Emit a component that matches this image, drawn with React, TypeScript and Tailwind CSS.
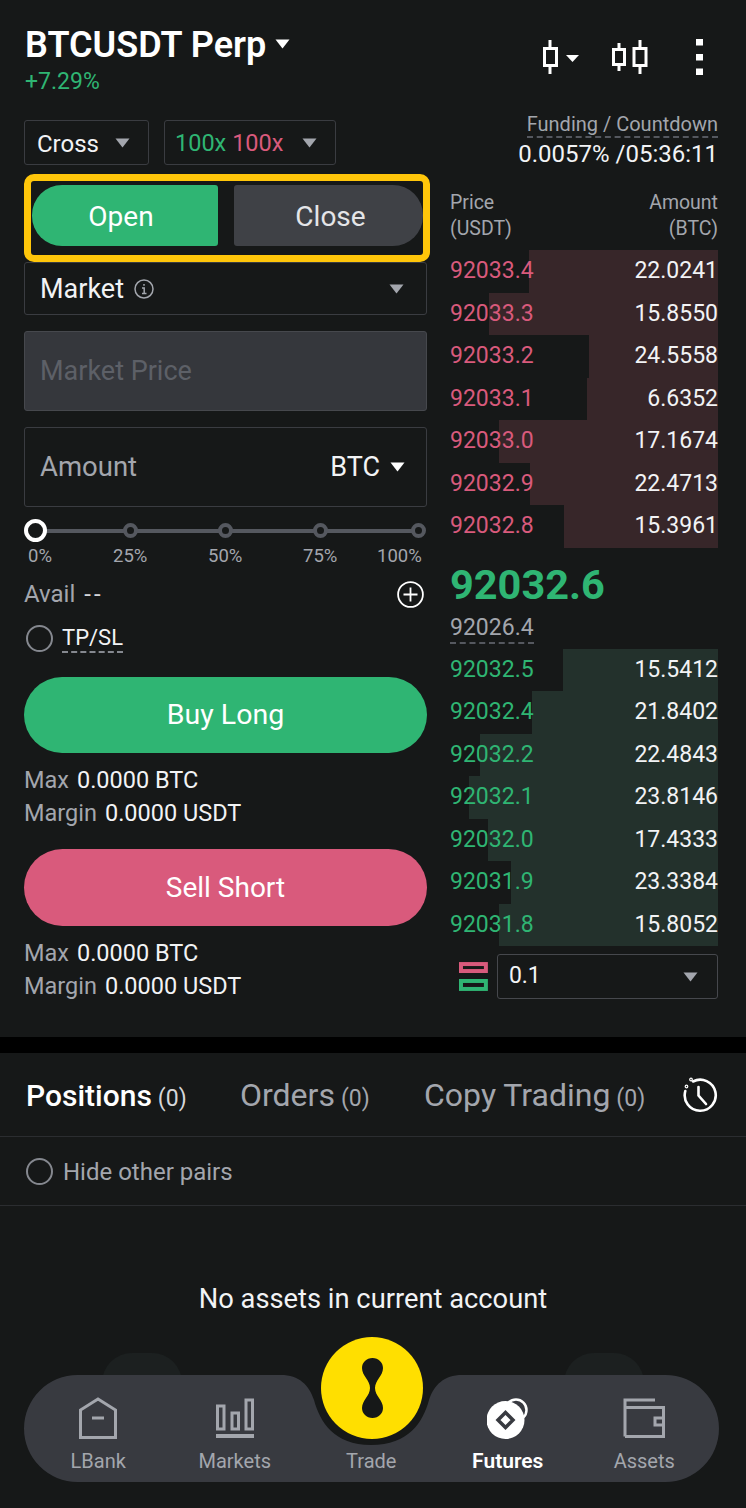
import React from "react";

const GREEN = "#2fb573";
const Tri = ({ w = 15, h = 10, c = "#a3a6ad" }: { w?: number; h?: number; c?: string }) => (
  <svg width={w} height={h} viewBox="0 0 15 10" className="shrink-0">
    <path d="M0.5 0.5H14.5L7.5 9.5Z" fill={c} />
  </svg>
);

const asks = [
  ["92033.4", "22.0241", 529],
  ["92033.3", "15.8550", 489],
  ["92033.2", "24.5558", 589],
  ["92033.1", "6.6352", 587],
  ["92033.0", "17.1674", 499],
  ["92032.9", "22.4713", 530],
  ["92032.8", "15.3961", 564],
] as const;
const bids = [
  ["92032.5", "15.5412", 563],
  ["92032.4", "21.8402", 532],
  ["92032.2", "22.4843", 480],
  ["92032.1", "23.8146", 469],
  ["92032.0", "17.4333", 488],
  ["92031.9", "23.3384", 511],
  ["92031.8", "15.8052", 499],
] as const;

const Row = ({ p, a, x, side }: { p: string; a: string; x: number; side: "ask" | "bid" }) => (
  <div className="relative flex h-[42.5px] items-center justify-between">
    <div
      className={`absolute top-0 bottom-0 right-0 ${side === "ask" ? "bg-[#372629]" : "bg-[#23312c]"}`}
      style={{ width: 718 - x }}
    />
    <span className={`relative text-[23px] ${side === "ask" ? "text-[#d95a7c]" : "text-[#2fb573]"}`}>{p}</span>
    <span className="relative text-[23px] text-[#f2f3f5]">{a}</span>
  </div>
);

const Tick = ({ className = "" }: { className?: string }) => (
  <div className={`relative h-[15px] w-[15px] rounded-full border-[4px] border-[#55585f] bg-[#161818] ${className}`} />
);

const Info = ({ label, value }: { label: string; value: string }) => (
  <div className="flex h-[33px] items-center text-[23.5px] leading-none">
    <span className="text-[#a3a6ad]">{label}</span>
    <span className="ml-[8px] text-[#f2f3f5]">{value}</span>
  </div>
);

const NavItem = ({ label, icon, active }: { label: string; icon?: React.ReactNode; active?: boolean }) => (
  <div className="flex w-[136.5px] flex-col items-center">
    <div className="flex h-[46px] items-center justify-center">{icon}</div>
    <span className={`mt-[8px] leading-[24px] ${active ? "text-[21px] font-semibold text-white" : "text-[20px] text-[#a3a6ad]"}`}>{label}</span>
  </div>
);

export default function App() {
  return (
    <div className="relative h-[1508px] w-[746px] overflow-hidden bg-[#161818] font-['Roboto',sans-serif]">
      {/* header */}
      <div className="flex h-[120px] items-start justify-between pl-[25px] pr-[41px] pt-[24px]">
        <div>
          <div className="flex items-center">
            <span className="text-[36px] font-semibold leading-[42px] text-white">BTCUSDT Perp</span>
            <span className="ml-[9px] mb-[2px]"><Tri w={15} h={10} c="#ffffff" /></span>
          </div>
          <div className="mt-[2px] text-[23px] leading-[28px] text-[#2fb573]">+7.29%</div>
        </div>
        <div className="mt-[15px] flex items-center">
          <svg width="38" height="36" viewBox="0 0 38 36" fill="none" stroke="#fff" strokeWidth="3">
            <path d="M8 1V9M8 27V35" />
            <rect x="2.5" y="9.5" width="12" height="17" />
            <path d="M24 16H37L30.5 23Z" fill="#fff" stroke="none" />
          </svg>
          <svg className="ml-[32px]" width="36" height="36" viewBox="0 0 36 36" fill="none" stroke="#fff" strokeWidth="3">
            <path d="M7 4V10M7 26V32M28 1V9M28 27V35" />
            <rect x="1.5" y="10.5" width="11" height="15" />
            <rect x="22" y="9.5" width="12" height="17" />
          </svg>
          <svg className="ml-[47px]" width="10" height="36" viewBox="0 0 10 36" fill="#fff">
            <rect x="1" y="0" width="7" height="6.5" />
            <rect x="1" y="15" width="7" height="6.5" />
            <rect x="1" y="29.5" width="7" height="6.5" />
          </svg>
        </div>
      </div>

      {/* main columns */}
      <div className="flex h-[917px] pl-[24px] pr-[28px]">
        <div className="w-[403px]">
          <div className="flex h-[45px] gap-[15px]">
            <div className="flex w-[125px] items-center justify-between rounded-[3px] border border-[#3a3c41] pl-[12px] pr-[18px]">
              <span className="pt-[2px] text-[24px] text-[#f2f3f5]">Cross</span>
              <Tri />
            </div>
            <div className="flex w-[172px] items-center justify-between rounded-[3px] border border-[#3a3c41] pl-[10px] pr-[18px]">
              <span className="pt-[2px] text-[23.5px]">
                <span className="text-[#2fb573]">100x</span> <span className="text-[#d95a7c]">100x</span>
              </span>
              <Tri />
            </div>
          </div>

          <div className="relative z-10 mt-[9px] flex h-[88px] w-[406px] items-center gap-[16px] rounded-[10px] border-[7px] border-[#ffc60a] pb-[6px] pl-[1px]">
            <div className="flex h-[61px] w-[186px] items-center justify-center rounded-l-[30px] rounded-r-[3px] bg-[#2fb573] pr-[8px] pt-[3px] text-[28px] text-white">
              Open
            </div>
            <div className="flex h-[61px] w-[189px] items-center justify-center rounded-l-[3px] rounded-r-[30px] bg-[#3f4146] pl-[4px] pt-[3px] text-[28px] text-[#e4e5e8]">
              Close
            </div>
          </div>

          <div className="flex h-[53px] items-center justify-between rounded-[3px] border border-[#3a3c41] pl-[15px] pr-[22px]">
            <div className="flex items-center pt-[1px]">
              <span className="text-[27px] text-[#f2f3f5]">Market</span>
              <svg className="ml-[10px]" width="20" height="20" viewBox="0 0 20 20" fill="none" stroke="#a3a6ad" strokeWidth="1.5">
                <circle cx="10" cy="10" r="9" />
                <path d="M8 9H10.2V14.5M8 14.5H12.5M10 5V6.8" />
              </svg>
            </div>
            <Tri />
          </div>

          <div className="mt-[16px] flex h-[80px] items-center rounded-[3px] border border-[#46484d] bg-[#35373c] pl-[15px]">
            <span className="text-[27px] text-[#5d6067]">Market Price</span>
          </div>

          <div className="mt-[16px] flex h-[80px] items-center justify-between rounded-[3px] border border-[#3a3c41] pl-[15px] pr-[21px]">
            <span className="text-[27.5px] text-[#a3a6ad]">Amount</span>
            <div className="flex items-center gap-[10px]">
              <span className="text-[27px] text-[#f2f3f5]">BTC</span>
              <Tri c="#ffffff" />
            </div>
          </div>

          {/* slider */}
          <div className="relative mt-[12px] flex h-[23px] items-center">
            <div className="absolute left-[12px] right-[4px] top-[10px] h-[4px] bg-[#55585f]" />
            <div className="relative h-[23px] w-[23px] rounded-full border-[4px] border-white bg-[#161818]" />
            <Tick className="ml-[76px]" />
            <Tick className="ml-[80px]" />
            <Tick className="ml-[80px]" />
            <Tick className="ml-[83px]" />
          </div>
          <div className="mt-[3px] flex h-[24px] items-center pl-[4px] text-[18.5px] text-[#a3a6ad]">
            <span className="w-[26px]">0%</span>
            <span className="ml-[59px] w-[36px]">25%</span>
            <span className="ml-[59px] w-[36px]">50%</span>
            <span className="ml-[59px] w-[36px]">75%</span>
            <span className="ml-[38px]">100%</span>
          </div>

          <div className="mt-[8px] flex h-[34px] items-center justify-between pr-[3px]">
            <div className="flex items-center text-[24px]">
              <span className="text-[#a3a6ad]">Avail</span>
              <span className="ml-[9px] tracking-[3px] text-[#d5d6da]">--</span>
            </div>
            <svg width="27" height="27" viewBox="0 0 27 27" fill="none" stroke="#fff" strokeWidth="1.8">
              <circle cx="13.5" cy="13.5" r="12.4" />
              <path d="M13.5 6.5V20.5M6.5 13.5H20.5" />
            </svg>
          </div>

          <div className="mt-[10px] flex h-[34px] items-center pl-[2px]">
            <div className="h-[27px] w-[27px] rounded-full border-2 border-[#85888f]" />
            <span className="ml-[9px] border-b-2 border-dashed border-[#85888f] text-[22px] leading-[27px] text-[#f2f3f5]">TP/SL</span>
          </div>

          <div className="mt-[22px] flex h-[76px] items-center justify-center rounded-full bg-[#2fb573] text-[28.5px] text-white">
            Buy Long
          </div>
          <div className="mt-[11px]">
            <Info label="Max" value="0.0000 BTC" />
            <Info label="Margin" value="0.0000 USDT" />
          </div>
          <div className="mt-[19px] flex h-[77px] items-center justify-center rounded-full bg-[#d95a7c] text-[28px] text-white">
            Sell Short
          </div>
          <div className="mt-[11px]">
            <Info label="Max" value="0.0000 BTC" />
            <Info label="Margin" value="0.0000 USDT" />
          </div>
        </div>

        {/* order book */}
        <div className="-mt-[8px] ml-[23px] w-[268px]">
          <div className="flex flex-col items-end">
            <span className="border-b-2 border-dashed border-[#55585f] text-[20px] leading-[24px] text-[#a3a6ad]">Funding / Countdown</span>
            <span className="mt-[2px] text-[24px] leading-[28px] text-[#f2f3f5]">0.0057% /05:36:11</span>
          </div>
          <div className="mt-[22px] flex h-[52px] justify-between text-[19.5px] leading-[26px] text-[#a3a6ad]">
            <div>Price<br />(USDT)</div>
            <div className="text-right">Amount<br />(BTC)</div>
          </div>
          <div className="mt-[8px]">
            {asks.map(([p, a, x]) => <Row key={p} p={p} a={a} x={x} side="ask" />)}
          </div>
          <div className="mt-[12px] text-[41.5px] font-bold leading-[50px] text-[#2fb573]">92032.6</div>
          <div className="mt-[4px] flex h-[32px]">
            <span className="h-[30px] border-b-2 border-dashed border-[#55585f] text-[23px] leading-[28px] text-[#a3a6ad]">92026.4</span>
          </div>
          <div className="mt-[3px]">
            {bids.map(([p, a, x]) => <Row key={p} p={p} a={a} x={x} side="bid" />)}
          </div>
          <div className="mt-[8px] flex items-center">
            <svg className="ml-[9px]" width="29" height="29" viewBox="0 0 29 29" fill="none" strokeWidth="4">
              <rect x="2" y="2" width="25" height="7" stroke="#d95a7c" />
              <rect x="2" y="19" width="25" height="8" stroke={GREEN} />
            </svg>
            <div className="ml-[9px] flex h-[45px] w-[222px] items-center justify-between rounded-[3px] border border-[#46484d] pl-[11px] pr-[19px]">
              <span className="text-[23px] text-[#f2f3f5]">0.1</span>
              <Tri />
            </div>
          </div>
        </div>
      </div>

      <div className="h-[16px] bg-black" />

      {/* tabs */}
      <div className="flex h-[84px] items-center border-b border-[#2b2d30] pl-[26px] pr-[28px]">
        <div className="flex w-[214px] items-baseline pt-[1px]">
          <span className="text-[30px] font-medium text-white">Positions</span>
          <span className="ml-[6px] text-[23px] text-[#d5d6da]">(0)</span>
        </div>
        <div className="flex w-[184px] items-baseline pt-[1px]">
          <span className="text-[32px] text-[#a3a6ad]">Orders</span>
          <span className="ml-[6px] text-[23px] text-[#a3a6ad]">(0)</span>
        </div>
        <div className="flex items-baseline pt-[1px]">
          <span className="text-[32px] text-[#a3a6ad]">Copy Trading</span>
          <span className="ml-[6px] text-[23px] text-[#a3a6ad]">(0)</span>
        </div>
        <svg className="ml-auto" width="36" height="36" viewBox="0 0 36 36" fill="none" stroke="#fff" strokeWidth="2.6" strokeLinecap="round">
          <path d="M11 4.5A15.5 15.5 0 1 1 3.3 14" />
          <path d="M16.5 10V18.5L24 27" />
          <circle cx="4.5" cy="9.5" r="0.6" />
          <circle cx="9" cy="2.5" r="0.6" />
        </svg>
      </div>
      <div className="flex h-[69px] items-center border-b border-[#2b2d30] pl-[26px]">
        <div className="h-[27px] w-[27px] rounded-full border-2 border-[#85888f]" />
        <span className="ml-[10px] pt-[1px] text-[24px] text-[#a3a6ad]">Hide other pairs</span>
      </div>
      <div className="mt-[75px] text-center text-[27.3px] leading-[36px] text-[#f2f3f5]">No assets in current account</div>

      {/* bottom nav */}
      <div className="absolute left-[102px] top-[1353px] h-[60px] w-[80px] rounded-full bg-[#1c2020]" />
      <div className="absolute left-[564px] top-[1353px] h-[60px] w-[80px] rounded-full bg-[#1c2020]" />
      <div className="absolute left-[24px] top-[1375px] h-[107px] w-[695px]">
        <svg className="absolute inset-0" width="695" height="107" viewBox="0 0 695 107">
          <path
            d="M53.5 0H257C275 0 285 10 290 25C296 47 310 70 347 70C385 70 399 47 405 25C410 10 420 0 438 0H641.5A53.5 53.5 0 0 1 641.5 107H53.5A53.5 53.5 0 0 1 53.5 0Z"
            fill="#383a40"
          />
        </svg>
        <div className="relative flex h-full items-start pl-[6px] pt-[20px]">
          <NavItem
            label="LBank"
            icon={
              <svg width="38" height="42" viewBox="0 0 38 42" fill="none" stroke="#a3a6ad" strokeWidth="3">
                <path d="M1.5 40.5V13L19 2L36.5 13V40.5Z" />
                <path d="M13 21H25" />
              </svg>
            }
          />
          <NavItem
            label="Markets"
            icon={
              <svg width="38" height="40" viewBox="0 0 38 40" fill="none" stroke="#a3a6ad" strokeWidth="3">
                <rect x="1.5" y="8" width="6.5" height="23" />
                <rect x="16" y="15" width="6.5" height="16" />
                <rect x="30" y="2" width="6.5" height="29" />
                <path d="M0 38H38" strokeWidth="4" />
              </svg>
            }
          />
          <NavItem label="Trade" />
          <NavItem
            active
            label="Futures"
            icon={
              <svg width="42" height="42" viewBox="0 0 42 42">
                <circle cx="29" cy="13" r="10.5" fill="none" stroke="#fff" strokeWidth="2.5" />
                <circle cx="18.5" cy="23" r="19" fill="#fff" />
                <path d="M18.5 15.5L26 23L18.5 30.5L11 23Z" fill="none" stroke="#383a40" strokeWidth="3.5" />
              </svg>
            }
          />
          <NavItem
            label="Assets"
            icon={
              <svg width="42" height="40" viewBox="0 0 42 40" fill="none" stroke="#a3a6ad" strokeWidth="3">
                <path d="M2 38.5V2H32" />
                <path d="M2 9.5H40.5V38.5H2" />
                <path d="M40.5 20H32V27H40.5" />
              </svg>
            }
          />
        </div>
      </div>
      <div className="absolute left-[321px] top-[1337px] flex h-[102px] w-[102px] items-center justify-center rounded-full bg-[#ffdf00]">
        <svg width="21" height="60" viewBox="0 0 21 60" fill="#161818">
          <path d="M10.5 0C16.5 0 21 4.5 21 10C21 18 13 22 13 30C13 38 21 42 21 50C21 55.5 16.5 60 10.5 60C4.5 60 0 55.5 0 50C0 42 8 38 8 30C8 22 0 18 0 10C0 4.5 4.5 0 10.5 0Z" />
        </svg>
      </div>
    </div>
  );
}
